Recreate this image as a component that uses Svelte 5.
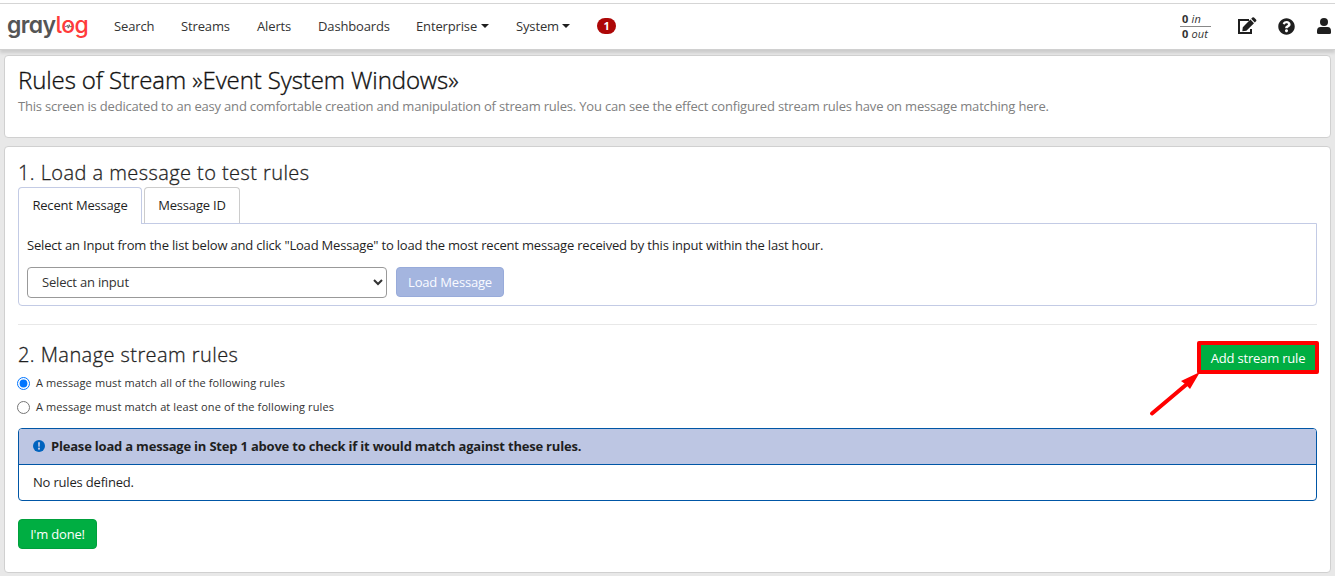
<script>
  let mode = $state('all');
  let input = $state('');
  const links = [
    { label: 'Search', width: 40 },
    { label: 'Streams', width: 49 },
    { label: 'Alerts', width: 34 },
    { label: 'Dashboards', width: 71 },
    { label: 'Enterprise', width: 73, menu: true },
    { label: 'System', width: 54, menu: true }
  ];
</script>

<div class="page">
  <nav>
    <a class="logo" href="#home" aria-label="graylog"><span>gray</span><span class="red">l<span class="o">o<svg class="pulse" viewBox="0 0 8 6" width="7" height="5"><path d="M0 3h1.500L2.600 1.400 3.700 5 4.800.8 5.800 3.800 6.400 3H8" /></svg></span>g</span></a>
    <ul>
      {#each links as link}
        <li style="width: {link.width}px">{link.label}{#if link.menu}<i class="caret"></i>{/if}</li>
      {/each}
    </ul>
    <span class="badge">1</span>
    <div class="tools">
      <div class="throughput">
        <div><b>0</b> <em>in</em></div>
        <div><b>0</b> <em>out</em></div>
      </div>
      <svg class="edit" viewBox="0 0 20 18" width="20" height="18"><path class="frame" d="M12 3H2v13h12v-4" /><path d="M5.800 10.200L13.400 2.600 17 6.200 9.400 13.800 5.300 14.300zM14.200 1.800l1.200-1.200q.8-.8 1.600 0l2 2q.8.8 0 1.600l-1.200 1.200z" /></svg>
      <svg class="help" viewBox="0 0 512 512" width="17" height="17"><path d="M504 256c0 136.997-111.043 248-248 248S8 392.997 8 256C8 119.083 119.043 8 256 8s248 111.083 248 248zM262.655 90c-54.497 0-89.255 22.957-116.549 63.758-3.536 5.286-2.353 12.415 2.715 16.258l34.699 26.310c5.205 3.947 12.621 3.008 16.665-2.122 17.864-22.658 30.113-35.797 57.303-35.797 20.429 0 45.698 13.148 45.698 32.958 0 14.976-12.363 22.667-32.534 33.976C247.128 238.528 216 254.941 216 296v4c0 6.627 5.373 12 12 12h56c6.627 0 12-5.373 12-12v-1.333c0-28.462 83.186-29.647 83.186-106.667 0-58.002-60.165-102-116.531-102zM256 338c-25.365 0-46 20.635-46 46 0 25.364 20.635 46 46 46s46-20.636 46-46c0-25.365-20.635-46-46-46z" /></svg>
      <svg class="user" viewBox="0 0 14 16" width="14" height="16"><circle cx="7" cy="4" r="4" /><path d="M3.500 9h7q3.500 0 3.500 4v1.500q0 1.500-1.500 1.500h-11Q0 16 0 14.500V13q0-4 3.500-4z" /></svg>
    </div>
  </nav>

  <section class="card intro">
    <h1>Rules of Stream »Event System Windows»</h1>
    <p>This screen is dedicated to an easy and comfortable creation and manipulation of stream rules. You can see the effect configured stream rules have on message matching here.</p>
  </section>

  <section class="card main">
    <h2>1. Load a message to test rules</h2>
    <div class="tabs">
      <button class="tab active">Recent Message</button>
      <button class="tab id">Message ID</button>
    </div>
    <div class="pane">
      <p>Select an Input from the list below and click "Load Message" to load the most recent message received by this input within the last hour.</p>
      <div class="form">
        <select bind:value={input}><option value="">Select an input</option></select>
        <button class="btn load" disabled={!input}>Load Message</button>
      </div>
    </div>
    <hr />
    <div class="manage">
      <h2>2. Manage stream rules</h2>
      <button class="add">Add stream rule
        <svg class="arrow" viewBox="0 0 52 46" width="52" height="46"><path d="M3 41.500L38 12" /><polygon points="51,0 32,9 36.500,12.200 41,17" /></svg>
      </button>
    </div>
    <label><input type="radio" value="all" bind:group={mode} /><span>A message must match all of the following rules</span></label>
    <label><input type="radio" value="one" bind:group={mode} /><span>A message must match at least one of the following rules</span></label>
    <div class="rules">
      <div class="notice">
        <svg viewBox="0 0 12 12" width="12" height="12"><circle cx="6" cy="6" r="6" fill="#0063be" /><path d="M5 2.200h2l-.3 4.600H5.300z" fill="#bdc6e3" /><circle cx="6" cy="8.700" r="1.100" fill="#bdc6e3" /></svg>
        <strong>Please load a message in Step 1 above to check if it would match against these rules.</strong>
      </div>
      <div class="empty">No rules defined.</div>
    </div>
    <button class="btn done">I'm done!</button>
  </section>
</div>

<style>
  :global(body) { background: #e8e8e8; overflow: hidden; }
  .page, .page * { box-sizing: border-box; }
  .page {
    height: 576px;
    font: 13px/18px "Open Sans", "Noto Sans", sans-serif;
    letter-spacing: -.185px;
    color: #1f1f1f;
    background: #e8e8e8;
    border-top: 3px solid #fff;
    overflow: hidden;
  }
  h1, h2, p, ul { margin: 0; padding: 0; font-weight: 400; }
  button { font: inherit; color: inherit; letter-spacing: inherit; margin: 0; padding: 0; white-space: nowrap; }
  nav {
    height: 47px;
    display: flex;
    align-items: center;
    background: #fff;
    border-top: 1px solid #d5d5d5;
    border-bottom: 1px solid #d0d0d0;
    box-shadow: 0 3px 3px rgba(0, 0, 0, .12);
    padding: 0 0 1px 7px;
  }
  .logo {
    width: 107px;
    font: 600 23px/28px Inter, sans-serif;
    font-feature-settings: "cv11", "ss04";
    letter-spacing: -.6px;
    color: #555;
    text-decoration: none;
    white-space: nowrap;
    margin-bottom: 2px;
  }
  .red { color: #ff3b3b; font-weight: 500; }
  .o { position: relative; }
  .pulse { position: absolute; left: 3.500px; top: 13px; fill: none; stroke: #555; stroke-width: 1; }
  ul { display: flex; gap: 27px; list-style: none; color: #333; letter-spacing: -.14px; }
  li { white-space: nowrap; display: flex; align-items: center; }
  .caret { border: 4px solid transparent; border-top-color: #1f1f1f; border-bottom: 0; margin-left: auto; }
  .badge {
    margin-left: 27px;
    width: 19px;
    height: 16px;
    border-radius: 8px;
    background: #ad0707;
    color: #fff;
    font-size: 11px;
    line-height: 16px;
    font-weight: 700;
    text-align: center;
  }
  .tools { margin-left: auto; display: flex; align-items: center; }
  .tools svg { fill: #1f1f1f; }
  .throughput { width: 31px; font-size: 11px; line-height: 13px; letter-spacing: .15px; margin-right: 26px; color: #333; white-space: nowrap; }
  .throughput div { padding-left: 2px; height: 14px; }
  .throughput div + div { border-top: 1px solid #888; }
  .edit { margin-right: 21px; }
  .edit .frame { fill: none; stroke: #1f1f1f; stroke-width: 2; }
  .help { margin-right: 22px; }
  .user { margin-right: 4px; }
  .card { background: #fff; border: 1px solid #d0d0d0; border-radius: 4px; margin: 0 4px; padding: 0 13px; }
  .intro { height: 83px; margin-top: 5px; padding-top: 9px; }
  h1 { font-size: 24px; line-height: 30px; font-weight: 300; letter-spacing: -.1px; white-space: nowrap; color: #111; -webkit-text-stroke: .35px; padding-bottom: 1px; }
  .intro p { color: #808080; line-height: 20px; white-space: nowrap; }
  .main { height: 427px; margin-top: 8px; padding-top: 14px; }
  h2 { font-size: 20px; line-height: 24px; font-weight: 300; letter-spacing: .43px; white-space: nowrap; -webkit-text-stroke: .3px; }
  .tabs { display: flex; gap: 2px; height: 39px; padding-top: 2px; }
  .tab { width: 124px; height: 36px; border: 1px solid #ccc; border-bottom: 0; border-radius: 4px 4px 0 0; background: #fff; padding-bottom: 1px; }
  .tab.active { height: 37px; border-color: #c3cbe5; position: relative; padding-bottom: 2px; }
  .tab.id { width: 96px; }
  .pane { height: 83px; margin-top: -1px; border: 1px solid #c3cbe5; border-radius: 0 0 4px 4px; padding: 12px 8px 0; }
  .pane p { white-space: nowrap; }
  .form { display: flex; gap: 9px; margin-top: 13px; }
  select { width: 360px; height: 31px; border: 1px solid #999; border-radius: 4px; background: #fff; font: inherit; letter-spacing: inherit; color: #333; padding: 0 0 1px 10px; }
  .btn { height: 30px; border-radius: 4px; color: #fff; border: 1px solid; }
  .load { width: 108px; background: #a4b5df; border-color: #98abda; color: #fafbff; }
  hr { margin: 18px 0 0; border: 0; border-top: 1px solid #e8e8e8; }
  .manage { display: flex; justify-content: space-between; height: 46px; padding-top: 18px; margin-right: -2px; }
  .add { position: relative; width: 122px; height: 33px; background: #00ae42; border: 4px solid #f00; border-radius: 2px; color: #fff; margin-top: -2px; }
  .arrow { position: absolute; left: -52px; top: 27px; fill: #f00; stroke: none; }
  .arrow path { stroke: #f00; stroke-width: 4; stroke-linecap: round; }
  label { display: flex; align-items: center; height: 24px; font-size: 11px; letter-spacing: .11px; color: #333; }
  input { width: 13px; height: 13px; margin: 0 6px 0 -1px; accent-color: #0075ff; }
  .rules { height: 73px; margin-top: 9px; border: 1px solid #0056a6; border-radius: 4px; overflow: hidden; }
  .notice { height: 36px; display: flex; align-items: center; gap: 6px; padding: 0 0 1px 14px; letter-spacing: -.2px; background: #bdc6e3; border-bottom: 1px solid #0056a6; }
  .empty { padding: 8px 14px; }
  .done { margin-top: 18px; width: 79px; background: #00ae42; border-color: #00a03c; }
</style>
